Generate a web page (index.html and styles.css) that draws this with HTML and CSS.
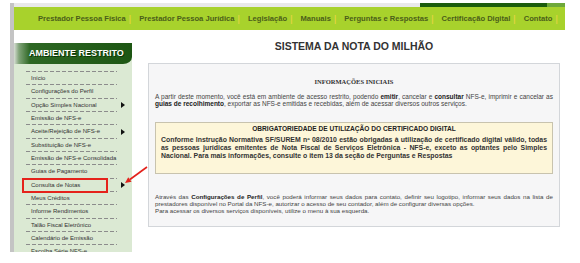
FILE: index.html
```html
<!DOCTYPE html>
<html lang="pt-BR">
<head>
    <meta charset="UTF-8">
    <meta name="viewport" content="width=device-width, initial-scale=1.0">
    <title>Sistema da Nota do Milhão - Ambiente Restrito</title>
    <link rel="stylesheet" href="styles.css">
</head>
<body>
    <div class="page">
        <div class="topline">
            <span class="topline-fill"></span>
            <span class="topline-green"></span>
            <span class="topline-end"></span>
        </div>

        <nav class="top-menu">
            <a href="#">Prestador Pessoa Física</a><span class="sep">|</span>
            <a href="#">Prestador Pessoa Jurídica</a><span class="sep">|</span>
            <a href="#">Legislação</a><span class="sep">|</span>
            <a href="#">Manuais</a><span class="sep">|</span>
            <a href="#">Perguntas e Respostas</a><span class="sep">|</span>
            <a href="#">Certificação Digital</a><span class="sep">|</span>
            <a href="#">Contato</a><span class="sep">|</span>
        </nav>

        <div class="main">
            <aside class="sidebar">
                <div class="sidebar-title">AMBIENTE RESTRITO</div>
                <ul class="side-menu">
                    <li><a class="side-link" href="#">Início</a></li>
                    <li><a class="side-link" href="#">Configurações do Perfil</a></li>
                    <li><a class="side-link" href="#">Opção Simples Nacional</a><span class="arrow"></span></li>
                    <li><a class="side-link" href="#">Emissão de NFS-e</a></li>
                    <li><a class="side-link" href="#">Aceite/Rejeição de NFS-e</a><span class="arrow"></span></li>
                    <li><a class="side-link" href="#">Substituição de NFS-e</a></li>
                    <li><a class="side-link" href="#">Emissão de NFS-e Consolidada</a></li>
                    <li><a class="side-link" href="#">Guias de Pagamento</a></li>
                    <li class="marked"><a class="side-link" href="#">Consulta de Notas</a><span class="arrow"></span><span class="mark-box"></span></li>
                    <li><a class="side-link" href="#">Meus Créditos</a></li>
                    <li><a class="side-link" href="#">Informe Rendimentos</a></li>
                    <li><a class="side-link" href="#">Talão Fiscal Eletrônico</a></li>
                    <li><a class="side-link" href="#">Calendário de Emissão</a></li>
                    <li><a class="side-link" href="#">Escolha Série NFS-e</a></li>
                </ul>
            </aside>

            <section class="content">
                <h1>SISTEMA DA NOTA DO MILHÃO</h1>
                <div class="info">
                    <h2>INFORMAÇÕES INICIAIS</h2>
                    <p class="intro">A partir deste momento, você está em ambiente de acesso restrito, podendo <b>emitir</b>, cancelar e <b>consultar</b> NFS-e, imprimir e cancelar as <b>guias de recolhimento</b>, exportar as NFS-e emitidas e recebidas, além de acessar diversos outros serviços.</p>

                    <div class="notice">
                        <h3>OBRIGATORIEDADE DE UTILIZAÇÃO DO CERTIFICADO DIGITAL</h3>
                        <p>Conforme Instrução Normativa SF/SUREM nº 08/2010 estão obrigadas à utilização de certificado digital válido, todas as pessoas jurídicas emitentes de Nota Fiscal de Serviços Eletrônica - NFS-e, exceto as optantes pelo Simples Nacional. Para mais informações, consulte o item 13 da seção de Perguntas e Respostas</p>
                    </div>

                    <p class="outro">Através das <b>Configurações de Perfil</b>, você poderá informar seus dados para contato, definir seu logotipo, informar seus dados na lista de prestadores disponível no Portal da NFS-e, autorizar o acesso de seu contador, além de configurar diversas opções.<br>Para acessar os diversos serviços disponíveis, utilize o menu à sua esquerda.</p>
                </div>
            </section>
        </div>
    </div>

    <!-- seta de destaque -->
    <svg class="callout" width="32" height="26" viewBox="0 0 32 26">
        <line x1="27" y1="5" x2="9.9" y2="17.5" stroke="#e3211b" stroke-width="1.6"/>
        <polygon points="5,21 11.6,19.8 8.2,15.2" fill="#e3211b"/>
    </svg>
</body>
</html>
```

FILE: styles.css
```css
body {
    margin: 0;
    background-color: #ffffff;
    font-family: "Liberation Sans", Arial, sans-serif;
    color: #333333;
}

.page {
    margin: 3px 0 0 10px;
    width: 551px;
    height: 249px;
    border-left: 4px solid #c4c4c4;
    overflow: hidden;
}

/* faixa superior */
.topline {
    display: flex;
    height: 4px;
}

.topline-fill {
    flex: 1;
    background-color: #e9e9e9;
}

.topline-green {
    width: 127px;
    background-color: #1c5c0d;
}

.topline-end {
    width: 18px;
    background-color: #6ea83a;
}

/* menu verde */
.top-menu {
    display: flex;
    align-items: center;
    height: 23px;
    padding-left: 24px;
    background-color: #a8d22c;
    white-space: nowrap;
    overflow: hidden;
}

.top-menu a {
    color: #4b5e1a;
    font-size: 7.6px;
    font-weight: bold;
    text-decoration: none;
}

.sep {
    color: #f2d54a;
    font-size: 9px;
    margin: 0 8px 0 3px;
}

.main {
    display: flex;
    margin-top: 10px;
}

/* menu lateral */
.sidebar {
    width: 118px;
    height: 209px;
    margin-top: 3px;
    background-color: #dbe9d3;
    overflow: hidden;
}

.sidebar-title {
    height: 21px;
    line-height: 21px;
    padding-left: 15px;
    color: #ffffff;
    font-size: 9px;
    font-weight: bold;
    text-shadow: 1px 1px 0 #0b3506;
    background: linear-gradient(to right, #d6ddd3 0, #80a378 5px, #2d6723 16px, #1d5613 100%);
    border-bottom-right-radius: 9px 7px;
}

.side-menu {
    list-style: none;
    margin: 0;
    padding: 7px 0 0 12px;
}

.side-menu::before {
    content: "";
    display: block;
    width: 91px;
    height: 1px;
    background: repeating-linear-gradient(to right, #8c8c8c 0 4px, transparent 4px 6px);
}

.side-menu li {
    position: relative;
    display: flex;
    align-items: center;
    height: 13.33px;
}

.side-link {
    box-sizing: border-box;
    width: 91px;
    height: 100%;
    padding-left: 5px;
    line-height: 12.5px;
    font-size: 6px;
    color: #333333;
    text-decoration: none;
    background: repeating-linear-gradient(to right, #8c8c8c 0 4px, transparent 4px 6px) bottom left / 100% 1px no-repeat;
}

.arrow {
    margin-left: 4px;
    width: 0;
    height: 0;
    border-left: 4px solid #111111;
    border-top: 3px solid transparent;
    border-bottom: 3px solid transparent;
}

.mark-box {
    position: absolute;
    left: -4px;
    top: -1px;
    width: 82px;
    height: 11px;
    border: 2px solid #e5231c;
}

/* conteúdo */
.content {
    width: 412px;
    margin-left: 16px;
}

h1 {
    margin: 0 0 11px;
    height: 12px;
    line-height: 12px;
    text-align: center;
    font-size: 10.5px;
    color: #333333;
}

.info {
    padding: 14px 6px 12px;
    background-color: #f6f6f7;
    border: 1px solid #d3d6da;
}

h2 {
    margin: 0;
    line-height: 7px;
    text-align: center;
    font-family: "Liberation Serif", "Times New Roman", serif;
    font-size: 6.5px;
    color: #333333;
}

.intro {
    margin: 7.5px 0 0;
    line-height: 7.5px;
    font-size: 6.5px;
    text-align: justify;
    color: #444444;
}

.intro b,
.outro b {
    color: #222222;
}

.notice {
    margin-top: 14.5px;
    height: 48px;
    padding: 2px 5px 0;
    background-color: #fdf6d9;
    border: 1px solid #c8c3ae;
}

h3 {
    margin: 0 0 3px;
    line-height: 8px;
    text-align: center;
    font-size: 6.6px;
    color: #222222;
}

.notice p {
    margin: 0;
    line-height: 8px;
    font-size: 6.9px;
    font-weight: bold;
    text-align: justify;
    color: #333333;
}

.outro {
    margin: 19px 0 0;
    line-height: 7.1px;
    font-size: 6.2px;
    text-align: justify;
    color: #444444;
}

.callout {
    position: absolute;
    left: 120px;
    top: 162px;
}
```
